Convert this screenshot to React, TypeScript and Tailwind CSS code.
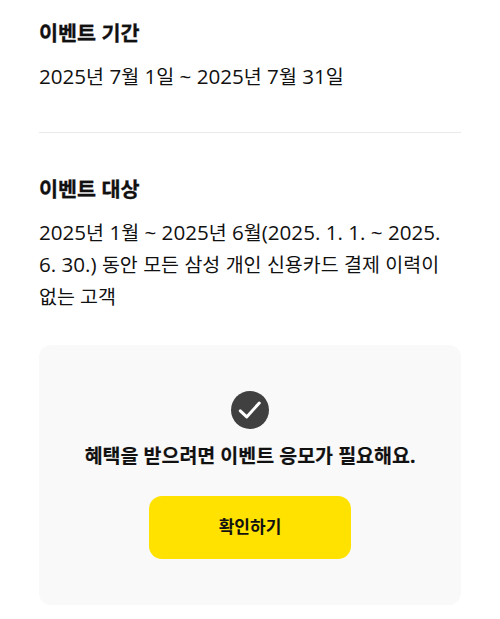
import React from 'react';

// 한글과 숫자의 크기를 따로 맞춘 본문 텍스트
const BodyText: React.FC<{ text: string }> = ({ text }) => (
    <>
        {text.split(/([가-힣]+)/).map((part, i) =>
            i % 2 === 1 ? (
                part
            ) : (
                <span key={i} className="font-['Open_Sans','Noto_Sans',sans-serif] text-[20.6px] leading-none">
                    {part}
                </span>
            )
        )}
    </>
);

const App: React.FC = () => {
    return (
        <main className="h-[619px] w-[500px] overflow-hidden bg-white px-[39px] pt-[17px] font-['Noto_Sans','Noto_Sans_CJK_KR',sans-serif] text-[#111]">
            <section className="border-b border-[#eaeaea] pb-[39px]">
                <h2 className="text-[20.7px] leading-8 font-bold [-webkit-text-stroke:0.3px_#111]">이벤트 기간</h2>
                <p className="mt-3 h-8 text-[19.5px] leading-8 whitespace-nowrap">
                    <BodyText text="2025년 7월 1일 ~ 2025년 7월 31일" />
                </p>
            </section>

            <section className="pt-10">
                <h2 className="text-[20.7px] leading-8 font-bold [-webkit-text-stroke:0.3px_#111]">이벤트 대상</h2>
                <p className="mt-3 h-24 text-[19.5px] leading-8 whitespace-nowrap">
                    <BodyText text="2025년 1월 ~ 2025년 6월(2025. 1. 1. ~ 2025." /><br />
                    <BodyText text="6. 30.) 동안 모든 삼성 개인 신용카드 결제 이력이" /><br />
                    없는 고객
                </p>
            </section>

            {/* 응모 안내 */}
            <section className="mt-8 flex h-[260px] flex-col items-center rounded-xl bg-[#f9f9f9] pt-[45px]">
                <svg className="size-[40px]" viewBox="0 0 40 40" fill="none">
                    <circle cx="20" cy="20" r="19" fill="#404040" />
                    <path
                        d="M10.3 20.8 16.7 26.9 29.3 13"
                        stroke="white"
                        strokeWidth="3"
                        strokeLinecap="round"
                        strokeLinejoin="round"
                    />
                </svg>
                <p className="mt-[10px] text-[19.5px] leading-8 font-bold whitespace-nowrap [-webkit-text-stroke:0.15px_#111]">
                    혜택을 받으려면 이벤트 응모가 필요해요.
                </p>
                <button type="button" className="mt-6 h-[63px] w-[202px] rounded-[13px] bg-[#ffe200] pb-0.5 text-[17px] font-bold">
                    확인하기
                </button>
            </section>
        </main>
    );
};

export default App;
